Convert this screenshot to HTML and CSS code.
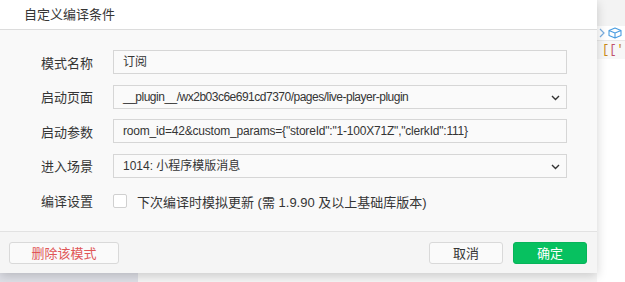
FILE: index.html
```html
<!DOCTYPE html>
<html lang="zh-CN">
<head>
<meta charset="utf-8">
<title>自定义编译条件</title>
<link rel="stylesheet" href="styles.css">
</head>
<body>
<div class="backdrop">
  <div class="strip-top"></div>
  <div class="strip-icons">
    <svg class="chev" width="6" height="10" viewBox="0 0 6 10"><path d="M1 1 L5 5 L1 9" fill="none" stroke="#7aaee0" stroke-width="1.2"/></svg>
    <svg class="cube" width="14" height="12" viewBox="0 0 14 12"><path d="M7 1 L13 3.5 L13 8.5 L7 11 L1 8.5 L1 3.5 Z M1 3.5 L7 6 L13 3.5 M7 6 L7 11" fill="none" stroke="#4a9de0" stroke-width="1.1" stroke-linejoin="round"/></svg>
  </div>
  <div class="strip-code"><span class="b1">[</span><span class="b2">[</span><span class="q">'</span></div>
  <div class="bottom-panel"></div>
</div>

<div class="dialog">
  <div class="dialog-header">自定义编译条件</div>
  <div class="dialog-body">
    <div class="row">
      <label class="label">模式名称</label>
      <div class="field">订阅</div>
    </div>
    <div class="row">
      <label class="label">启动页面</label>
      <div class="field select"><span class="tighter">__plugin__/wx2b03c6e691cd7370/pages/live-player-plugin</span>
        <svg class="arrow" width="9" height="6" viewBox="0 0 9 6"><path d="M1 1 L4.5 4.5 L8 1" fill="none" stroke="#333" stroke-width="1.4"/></svg>
      </div>
    </div>
    <div class="row">
      <label class="label">启动参数</label>
      <div class="field"><span class="tight">room_id=42&amp;custom_params={"storeId":"1-100X71Z","clerkId":111}</span></div>
    </div>
    <div class="row">
      <label class="label">进入场景</label>
      <div class="field select">1014: 小程序模版消息
        <svg class="arrow" width="9" height="6" viewBox="0 0 9 6"><path d="M1 1 L4.5 4.5 L8 1" fill="none" stroke="#333" stroke-width="1.4"/></svg>
      </div>
    </div>
    <div class="row">
      <label class="label">编译设置</label>
      <div class="check-wrap">
        <span class="checkbox"></span>
        <span class="check-text">下次编译时模拟更新 (需 1.9.90 及以上基础库版本)</span>
      </div>
    </div>
  </div>
  <div class="dialog-footer">
    <button class="btn btn-danger">删除该模式</button>
    <div class="footer-right">
      <button class="btn btn-default">取消</button>
      <button class="btn btn-primary">确定</button>
    </div>
  </div>
</div>
</body>
</html>
```

FILE: styles.css
```css
* { box-sizing: border-box; }
html, body { margin: 0; padding: 0; }
body {
  width: 625px;
  height: 282px;
  overflow: hidden;
  position: relative;
  background: #f6f6f6;
  font-family: "Liberation Sans", Arial, "Noto Sans CJK SC", sans-serif;
  font-size: 13px;
  color: #353535;
}
.backdrop { position: absolute; inset: 0; }
.strip-top {
  position: absolute; left: 597px; top: 0; width: 28px; height: 26px;
  background: #f3f3f3;
}
.strip-icons {
  position: absolute; left: 597px; top: 26px; width: 28px; height: 15px;
  background: #ffffff;
  border-bottom: 1px solid #e8e8e8;
  display: flex; align-items: center; gap: 3px; padding-left: 2px;
}
.strip-code {
  position: absolute; left: 597px; top: 41px; width: 28px; height: 18px;
  background: #f7f7f7;
  padding-left: 5px;
  font-family: "Liberation Mono", monospace;
  font-size: 12px; line-height: 18px;
}
.strip-code .b1 { color: #c98a16; }
.strip-code .b2 { color: #c0506a; }
.strip-code .q { color: #c98a16; }
.backdrop::after {
  content: ""; position: absolute; left: 597px; top: 59px; width: 28px; height: 223px; background: #ffffff;
}
.bottom-panel {
  position: absolute; left: 0; top: 272px; width: 138px; height: 10px;
  background: #dfe0e7;
}

.dialog {
  position: absolute; left: 0; top: 0;
  width: 597px;
  background: #f9f9f9;
  box-shadow: 0 3px 10px rgba(0,0,0,0.18);
}
.dialog-header {
  height: 30px;
  background: #ffffff;
  border-bottom: 1px solid #dcdcdc;
  padding-left: 24px;
  line-height: 27px;
  font-family: "Noto Sans CJK SC", sans-serif;
  font-size: 13px;
  color: #353535;
}
.dialog-body {
  padding: 20px 30px 19px 41px;
  display: flex; flex-direction: column; gap: 10.5px;
  border-bottom: 1px solid #e2e2e2;
}
.row { display: flex; align-items: center; height: 24px; }
.label {
  width: 72px; flex: none;
  font-family: "Noto Sans CJK SC", sans-serif;
  font-size: 13px; color: #353535;
}
.field {
  width: 454px; height: 24px;
  background: #fafafa;
  border: 1px solid #d6d6d6;
  padding-left: 9px;
  line-height: 22px;
  font-size: 12px;
  white-space: nowrap;
  position: relative;
  color: #353535;
}
.tight { letter-spacing: -0.2px; }
.tighter { letter-spacing: -0.5px; }
.select .arrow { position: absolute; right: 6px; top: 9px; }
.check-wrap { display: flex; align-items: center; padding-top: 2px; }
.checkbox {
  width: 14px; height: 14px;
  border: 1px solid #d0d0d0; border-radius: 2px;
  background: #ffffff;
}
.check-text { margin-left: 10px; }
.dialog-footer {
  height: 41px;
  background: #f5f5f5;
  display: flex; align-items: center; justify-content: space-between;
  padding: 0 10px 0 9px;
}
.footer-right { display: flex; gap: 10px; }
.btn {
  height: 22px; width: 110px;
  border: 1px solid #d9d9d9; border-radius: 3px;
  background: #fafafa;
  font-family: "Noto Sans CJK SC", sans-serif;
  font-size: 13px; line-height: 20px;
  padding: 0;
  color: #353535;
}
.btn-danger { color: #e05656; }
.btn-default, .btn-primary { width: 74px; }
.btn-primary { background: #07c160; border-color: #07b45a; color: #ffffff; }
```
